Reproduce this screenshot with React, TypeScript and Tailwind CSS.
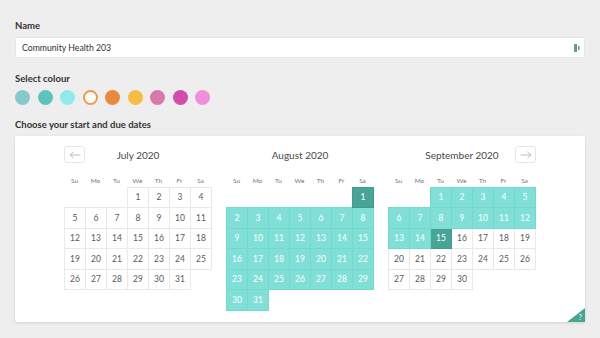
import React from "react";

const font = { fontFamily: 'Lato, "Open Sans", sans-serif' };

type Cell = { d: number; kind: "none" | "span" | "edge" } | null;

function buildMonth(startDow: number, days: number, kindOf: (d: number) => "none" | "span" | "edge"): Cell[][] {
  const cells: Cell[] = [];
  for (let i = 0; i < startDow; i++) cells.push(null);
  for (let d = 1; d <= days; d++) cells.push({ d, kind: kindOf(d) });
  while (cells.length % 7 !== 0) cells.push(null);
  const rows: Cell[][] = [];
  for (let i = 0; i < cells.length; i += 7) rows.push(cells.slice(i, i + 7));
  return rows;
}

const months = [
  { title: "July 2020", rows: buildMonth(3, 31, () => "none") },
  { title: "August 2020", rows: buildMonth(6, 31, (d) => (d === 1 ? "edge" : "span")) },
  {
    title: "September 2020",
    rows: buildMonth(2, 30, (d) => (d === 15 ? "edge" : d < 15 ? "span" : "none")),
  },
];

const weekdays = ["Su", "Mo", "Tu", "We", "Th", "Fr", "Sa"];

const colours = [
  { c: "bg-[#86c9cc]" },
  { c: "bg-[#5cc3bf]" },
  { c: "bg-[#8eebeb]" },
  { c: "bg-white border-2 border-[#ee9a45]" },
  { c: "bg-[#e8893c]" },
  { c: "bg-[#f5be42]" },
  { c: "bg-[#d879a9]" },
  { c: "bg-[#d24ca9]" },
  { c: "bg-[#ef8fdb]" },
];

function Arrow({ dir }: { dir: "left" | "right" }) {
  return (
    <svg width="12" height="8" viewBox="0 0 12 8" className={dir === "right" ? "" : "-scale-x-100"}>
      <path d="M0.5 4 H11 M7.5 0.8 L11 4 L7.5 7.2" fill="none" stroke="#b5b5b5" strokeWidth="0.9" />
    </svg>
  );
}

function Month({ title, rows, nav }: { title: string; rows: Cell[][]; nav?: "left" | "right" }) {
  return (
    <div className="px-[7px] pt-[10px]">
      <div className="relative h-[17px] flex items-center justify-center text-[10px] text-[#484848]">
        {nav === "left" && (
          <div className="absolute left-0 top-0 w-[21px] h-[17px] border border-[#e4e7e7] rounded-[3px] flex items-center justify-center">
            <Arrow dir="left" />
          </div>
        )}
        {nav === "right" && (
          <div className="absolute right-0 top-0 w-[21px] h-[17px] border border-[#e4e7e7] rounded-[3px] flex items-center justify-center">
            <Arrow dir="right" />
          </div>
        )}
        <span className="leading-none">{title}</span>
      </div>
      <div className="mt-[13px] h-[10.7px] grid grid-cols-[repeat(7,21px)] items-center text-[6.5px] text-[#757575]">
        {weekdays.map((w) => (
          <div key={w} className="text-center leading-none">
            {w}
          </div>
        ))}
      </div>
      <table className="border-collapse w-[147px] table-fixed">
        <tbody>
          {rows.map((r, i) => (
            <tr key={i} className="h-[20.47px]">
              {r.map((c, j) =>
                c === null ? (
                  <td key={j} className="w-[21px] p-0" />
                ) : (
                  <td
                    key={j}
                    className={
                      "w-[21px] p-0 text-center text-[8.5px] leading-none border " +
                      (c.kind === "edge"
                        ? "bg-[#46a597] border-[#3f9d90] text-white"
                        : c.kind === "span"
                        ? "bg-[#80dfd6] border-[#72d9cf] text-white"
                        : "bg-white border-[#e8eaea] text-[#565a5c]")
                    }
                  >
                    {c.d}
                  </td>
                )
              )}
            </tr>
          ))}
        </tbody>
      </table>
    </div>
  );
}

export default function App() {
  return (
    <div className="w-[600px] h-[338px] bg-[#eeeeee] px-[15px] pt-[20px] overflow-hidden" style={font}>
      <div className="text-[9.5px] font-bold text-[#333] leading-[12px]">Name</div>
      <div className="mt-[5px] h-[21px] w-[570px] bg-white border border-[#e3e6ea] rounded-[2px] flex items-center justify-between pl-[6px] pr-[4px]">
        <span className="text-[8.7px] text-[#333]">Community Health 203</span>
        <svg width="6" height="8" viewBox="0 0 6 8">
          <rect x="0" y="0" width="3" height="8" fill="#6a98a3" />
          <rect x="4" y="2" width="1.5" height="4" fill="#6a98a3" />
        </svg>
      </div>
      <div className="mt-[15px] text-[9.5px] font-bold text-[#333] leading-[12px]">Select colour</div>
      <div className="mt-[4.5px] flex gap-[7.5px]">
        {colours.map((c, i) => (
          <div key={i} className={"w-[15px] h-[15px] rounded-full box-border " + c.c} />
        ))}
      </div>
      <div className="mt-[14.5px] text-[9.5px] font-bold text-[#333] leading-[12px]">Choose your start and due dates</div>
      <div className="relative mt-[5px] h-[186px] bg-white rounded-[2px] shadow-[0_1px_3px_rgba(0,0,0,0.12)] flex justify-center">
        <Month title={months[0].title} rows={months[0].rows} nav="left" />
        <Month title={months[1].title} rows={months[1].rows} />
        <Month title={months[2].title} rows={months[2].rows} nav="right" />
        <div className="absolute right-0 bottom-0 w-0 h-0 border-t-[14px] border-t-transparent border-r-[18px] border-r-[#46a597]" />
        <div className="absolute right-[3px] bottom-[1px] text-[7px] leading-none text-white">?</div>
      </div>
    </div>
  );
}
